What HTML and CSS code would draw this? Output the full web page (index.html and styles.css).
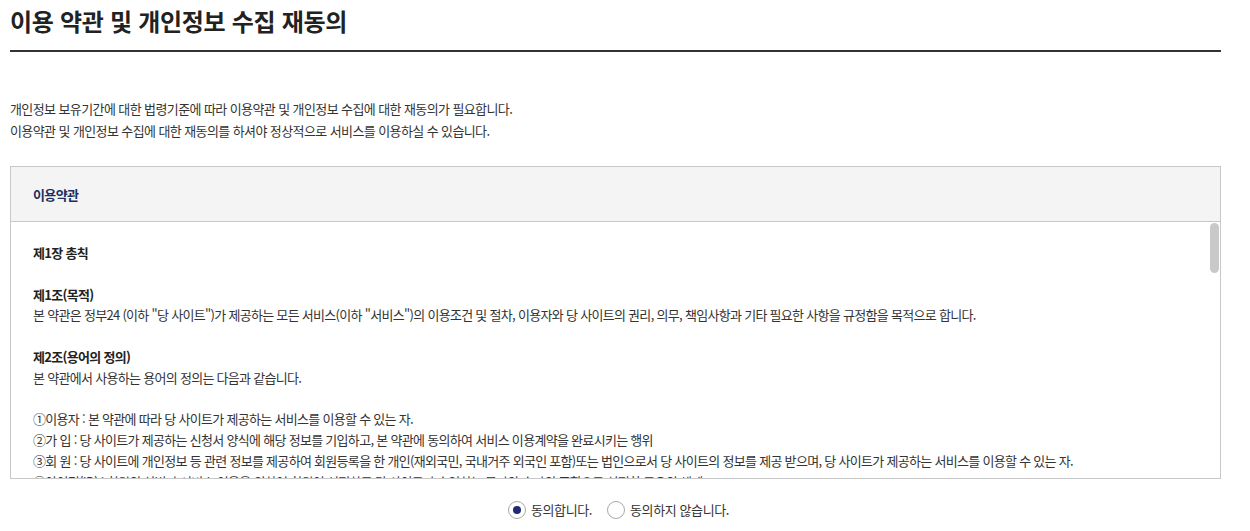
FILE: index.html
```html
<!DOCTYPE html>
<html lang="ko">
<head>
<meta charset="utf-8">
<title>이용 약관 및 개인정보 수집 재동의</title>
<link rel="stylesheet" href="styles.css">
</head>
<body>
<div class="page">
  <h2 class="page-title">이용 약관 및 개인정보 수집 재동의</h2>
  <div class="intro">
    <p>개인정보 보유기간에 대한 법령기준에 따라 이용약관 및 개인정보 수집에 대한 재동의가 필요합니다.</p>
    <p>이용약관 및 개인정보 수집에 대한 재동의를 하셔야 정상적으로 서비스를 이용하실 수 있습니다.</p>
  </div>
  <div class="terms-box">
    <div class="terms-head">이용약관</div>
    <div class="terms-scroll">
      <div class="terms-body">
        <h4 class="chapter">제1장 총칙</h4>
        <div class="article">
          <h5>제1조(목적)</h5>
          <p>본 약관은 정부24 (이하 "당 사이트")가 제공하는 모든 서비스(이하 "서비스")의 이용조건 및 절차, 이용자와 당 사이트의 권리, 의무, 책임사항과 기타 필요한 사항을 규정함을 목적으로 합니다.</p>
        </div>
        <div class="article">
          <h5>제2조(용어의 정의)</h5>
          <p>본 약관에서 사용하는 용어의 정의는 다음과 같습니다.</p>
          <ul class="items">
            <li>①이용자 : 본 약관에 따라 당 사이트가 제공하는 서비스를 이용할 수 있는 자.</li>
            <li>②가 입 : 당 사이트가 제공하는 신청서 양식에 해당 정보를 기입하고, 본 약관에 동의하여 서비스 이용계약을 완료시키는 행위</li>
            <li>③회 원 : 당 사이트에 개인정보 등 관련 정보를 제공하여 회원등록을 한 개인(재외국민, 국내거주 외국인 포함)또는 법인으로서 당 사이트의 정보를 제공 받으며, 당 사이트가 제공하는 서비스를 이용할 수 있는 자.</li>
            <li>④아이디(ID) : 회원의 식별과 서비스 이용을 위하여 회원이 선정하고 당 사이트가 승인하는 문자와 숫자의 조합으로 설정한 고유의 체계</li>
            <li>⑤비밀번호 : 회원이 부여받은 아이디와 일치된 회원임을 확인하고 회원의 권익 보호를 위하여 회원이 선정한 문자와 숫자의 조합</li>
            <li>⑥탈 퇴 : 회원이 이용계약을 종료시키는 행위</li>
          </ul>
        </div>
        <h4 class="chapter">제2장 서비스 이용계약</h4>
        <div class="article">
          <h5>제3조(이용계약의 성립)</h5>
          <p>이용계약은 신청자가 온라인으로 당 사이트에서 제공하는 소정의 가입신청 양식에서 요구하는 사항을 기록하여 가입을 완료하는 것으로 성립됩니다.</p>
        </div>
        <div class="article">
          <h5>제4조(이용신청의 처리)</h5>
          <p>당 사이트는 다음 각 호에 해당하는 이용계약에 대하여는 가입을 취소할 수 있습니다.</p>
          <ul class="items">
            <li>①다른 사람의 명의를 사용하여 신청하였을 때</li>
            <li>②이용계약 신청서의 내용을 허위로 기재하였거나 신청하였을 때</li>
            <li>③다른 사람의 당 사이트 서비스 이용을 방해하거나 그 정보를 도용한 경우</li>
            <li>④당 사이트를 이용하여 법령과 본 약관이 금지하는 행위를 하는 경우</li>
            <li>⑤기타 당 사이트가 정한 이용신청요건이 미비 되었을 때</li>
          </ul>
        </div>
        <div class="article">
          <h5>제5조(이용계약의 변경 및 해지)</h5>
          <p>회원은 이용계약을 해지하고자 하는 때에는 당 사이트의 회원정보 메뉴에서 회원탈퇴를 신청하여야 합니다.</p>
          <p>당 사이트는 회원이 다음 각 호에 해당하는 행위를 하였을 경우 사전통지 없이 이용계약을 해지하거나 기간을 정하여 서비스 이용을 중지할 수 있습니다.</p>
          <ul class="items">
            <li>①타인의 서비스 아이디 및 비밀번호를 도용한 경우</li>
            <li>②서비스 운영을 고의로 방해한 경우</li>
            <li>③가입한 이름이 실명이 아닌 경우</li>
            <li>④같은 사용자가 다른 아이디로 이중등록을 한 경우</li>
            <li>⑤공공질서 및 미풍양속에 저해되는 내용을 고의로 유포시킨 경우</li>
            <li>⑥회원이 국익 또는 사회적 공익을 저해할 목적으로 서비스 이용을 계획 또는 실행하는 경우</li>
            <li>⑦타인의 명예를 손상시키거나 불이익을 주는 행위를 한 경우</li>
            <li>⑧서비스의 안정적 운영을 방해할 목적으로 다량의 정보를 전송하거나 광고성 정보를 전송하는 경우</li>
            <li>⑨정보통신설비의 오작동이나 정보 등의 파괴를 유발시키는 컴퓨터 바이러스 프로그램 등을 유포하는 경우</li>
            <li>⑩당 사이트, 다른 회원 또는 제3자의 지적재산권을 침해하는 경우</li>
          </ul>
        </div>
        <h4 class="chapter">제3장 서비스의 이용</h4>
        <div class="article">
          <h5>제6조(서비스 이용시간)</h5>
          <p>서비스 이용시간은 업무상 또는 기술상 특별한 지장이 없는 한 연중무휴 1일 24시간을 원칙으로 합니다.</p>
        </div>
        <div class="article">
          <h5>제7조(서비스의 중지)</h5>
          <p>당 사이트는 컴퓨터 등 정보통신설비의 보수점검, 교체 및 고장, 통신의 두절 등의 사유가 발생한 경우에는 서비스의 제공을 일시적으로 중단할 수 있습니다.</p>
        </div>
      </div>
      <div class="scroll-thumb" aria-hidden="true"></div>
    </div>
  </div>
  <div class="agree-row">
    <label class="radio"><input type="radio" name="agree" checked><span>동의합니다.</span></label>
    <label class="radio"><input type="radio" name="agree"><span>동의하지 않습니다.</span></label>
  </div>
</div>
</body>
</html>
```
FILE: styles.css
```css
* { box-sizing: border-box; }
html, body { margin: 0; padding: 0; background: #fff; }
body {
  font-family: "Noto Sans CJK KR", "Noto Sans", sans-serif;
  color: #333;
}
.page {
  width: 1221px;
  padding-left: 10px;
}
.page-title {
  margin: 0;
  height: 52px;
  padding-top: 2px;
  font-size: 24px;
  line-height: 38px;
  font-weight: 700;
  letter-spacing: -0.3px;
  color: #222;
  border-bottom: 2px solid #333;
}
.intro {
  padding-top: 46px;
  font-size: 13px;
  line-height: 22px;
  letter-spacing: -0.6px;
  color: #333;
}
.intro p { margin: 0; }
.terms-box {
  margin-top: 24px;
  border: 1px solid #c8c8c8;
}
.terms-head {
  height: 55px;
  padding-left: 22px;
  display: flex;
  align-items: center;
  background: #f4f4f4;
  border-bottom: 1px solid #c8c8c8;
  font-size: 13px;
  font-weight: 700;
  letter-spacing: -0.6px;
  color: #1d2f5e;
}
.terms-scroll {
  position: relative;
}
.terms-body {
  height: 256px;
  overflow-y: auto;
  padding: 21px 22px 20px;
  font-size: 13px;
  line-height: 20.8px;
  letter-spacing: -0.7px;
  color: #333;
}
.scroll-thumb {
  position: absolute;
  top: 1px;
  right: 1px;
  width: 9px;
  height: 50px;
  border-radius: 5px;
  background: #c9c9c9;
}
.chapter, .terms-body h5 {
  margin: 0;
  font-size: 13px;
  font-weight: 700;
  color: #222;
}
.chapter { margin-bottom: 20.8px; }
.article { margin-bottom: 20.8px; }
.article p { margin: 0; }
.items {
  list-style: none;
  margin: 20.8px 0 0;
  padding: 0;
}
.agree-row {
  display: flex;
  justify-content: center;
  gap: 15px;
  padding-top: 21px;
  padding-left: 6px;
  font-size: 13px;
  letter-spacing: -0.4px;
  color: #333;
}
.radio {
  display: flex;
  align-items: center;
  gap: 5px;
  line-height: 20px;
  cursor: pointer;
}
.radio input {
  appearance: none;
  -webkit-appearance: none;
  margin: 0;
  width: 18px;
  height: 18px;
  border: 1px solid #a9a9a9;
  border-radius: 50%;
  background: #fff;
  display: grid;
  place-items: center;
  flex: none;
}
.radio input:checked::before {
  content: "";
  width: 8px;
  height: 8px;
  border-radius: 50%;
  background: #1f2a78;
}
```
